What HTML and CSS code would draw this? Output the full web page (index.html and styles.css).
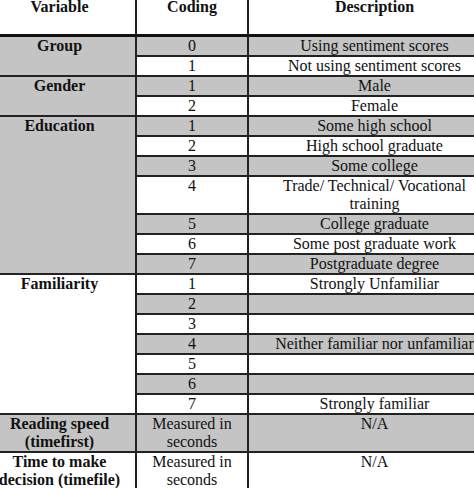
FILE: index.html
```html
<!DOCTYPE html>
<html>
<head>
<meta charset="utf-8">
<link rel="stylesheet" href="styles.css">
</head>
<body>
<table class="data">
<colgroup><col class="c1"><col class="c2"><col class="c3"></colgroup>
<thead>
<tr><th class="var">Variable</th><th class="code">Coding</th><th class="desc">Description</th></tr>
</thead>
<tbody>
<tr class="s"><td class="var gy" rowspan="2">Group</td><td class="code">0</td><td class="desc">Using sentiment scores</td></tr>
<tr><td class="code">1</td><td class="desc">Not using sentiment scores</td></tr>
<tr class="s"><td class="var gy" rowspan="2">Gender</td><td class="code">1</td><td class="desc">Male</td></tr>
<tr><td class="code">2</td><td class="desc">Female</td></tr>
<tr class="s"><td class="var gy" rowspan="7">Education</td><td class="code">1</td><td class="desc">Some high school</td></tr>
<tr><td class="code">2</td><td class="desc">High school graduate</td></tr>
<tr class="s"><td class="code">3</td><td class="desc">Some college</td></tr>
<tr><td class="code">4</td><td class="desc">Trade/ Technical/ Vocational<br>training</td></tr>
<tr class="s"><td class="code">5</td><td class="desc">College graduate</td></tr>
<tr><td class="code">6</td><td class="desc">Some post graduate work</td></tr>
<tr class="s"><td class="code">7</td><td class="desc">Postgraduate degree</td></tr>
<tr><td class="var wh" rowspan="7">Familiarity</td><td class="code">1</td><td class="desc">Strongly Unfamiliar</td></tr>
<tr class="s"><td class="code">2</td><td class="desc"></td></tr>
<tr><td class="code">3</td><td class="desc"></td></tr>
<tr class="s"><td class="code">4</td><td class="desc">Neither familiar nor unfamiliar</td></tr>
<tr><td class="code">5</td><td class="desc"></td></tr>
<tr class="s"><td class="code">6</td><td class="desc"></td></tr>
<tr><td class="code">7</td><td class="desc">Strongly familiar</td></tr>
<tr class="s"><td class="var gy">Reading speed<br>(timefirst)</td><td class="code">Measured in<br>seconds</td><td class="desc">N/A</td></tr>
<tr><td class="var wh">Time to make<br>decision (timefile)</td><td class="code">Measured in<br>seconds</td><td class="desc">N/A</td></tr>
</tbody>
</table>
</body>
</html>
```
FILE: styles.css
```css
html, body {
  margin: 0;
  padding: 0;
  background: #ffffff;
  overflow: hidden;
}
body {
  width: 474px;
  height: 488px;
}
.data {
  margin: 0 0 0 -16px;
  width: 518px;
  table-layout: fixed;
  border-collapse: separate;
  border-spacing: 0;
  font-family: "Liberation Serif", "Times New Roman", serif;
  font-size: 16px;
  line-height: 18px;
  color: #111111;
}
.c1 { width: 153px; }
.c2 { width: 112px; }
.c3 { width: 253px; }
.data th,
.data td {
  padding: 0;
  text-align: center;
  vertical-align: top;
  white-space: nowrap;
  background: #ffffff;
  border-bottom: 2px solid #222222;
}
.data th {
  height: 34px;
  line-height: 14px;
  font-weight: bold;
  border-bottom: 3px solid #111111;
}
.data .var,
.data .code,
.data .desc {
  border-right: 2px solid #222222;
}
.data td.var {
  font-weight: bold;
}
.data .s td {
  background: #c4c4c4;
}
.data td.gy {
  background: #c4c4c4;
}
.data td.wh {
  background: #ffffff;
}
```
